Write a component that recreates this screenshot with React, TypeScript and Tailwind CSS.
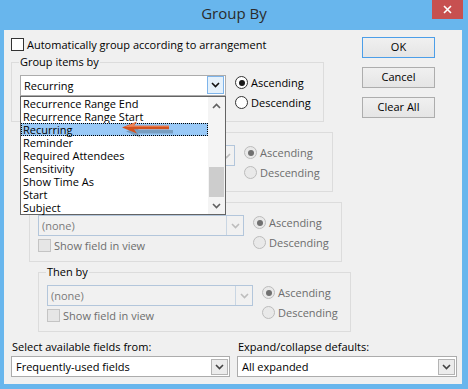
import React from "react";

const Chevron = ({ color = "#1a1a1a", up = false }: { color?: string; up?: boolean }) => (
  <svg width="9" height="6" viewBox="0 0 9 6">
    <path
      d={up ? "M1 5 L4.5 1.5 L8 5" : "M1 1 L4.5 4.5 L8 1"}
      fill="none"
      stroke={color}
      strokeWidth="1.6"
    />
  </svg>
);

const Radio = ({ label, checked, disabled }: { label: string; checked?: boolean; disabled?: boolean }) => (
  <div className="flex items-center h-[13px]">
    <span
      className={
        disabled
          ? "w-[13px] h-[13px] rounded-full border border-[#bcbcbc] bg-[#e9e9e9] flex items-center justify-center"
          : "w-[13px] h-[13px] rounded-full border border-[#333333] bg-white flex items-center justify-center"
      }
    >
      {checked ? (
        <span
          className={
            disabled
              ? "w-[6px] h-[6px] rounded-full bg-[#707070]"
              : "w-[6px] h-[6px] rounded-full bg-[#1a1a1a]"
          }
        />
      ) : null}
    </span>
    <span className={disabled ? "ml-[3px] leading-[14px] text-[#6d6d6d]" : "ml-[3px] leading-[14px] text-black"}>
      {label}
    </span>
  </div>
);

const Check = ({ label, disabled, hidden }: { label: string; disabled?: boolean; hidden?: boolean }) => (
  <div className={hidden ? "flex items-center h-[13px] invisible" : "flex items-center h-[13px]"}>
    <span
      className={
        disabled
          ? "w-[13px] h-[13px] border border-[#c4c4c4] bg-[#e6e6e6]"
          : "w-[13px] h-[13px] border border-[#333333] bg-white"
      }
    />
    <span className={disabled ? "ml-[3px] leading-[14px] text-[#6d6d6d]" : "ml-[3px] leading-[14px] text-black"}>
      {label}
    </span>
  </div>
);

const DisabledCombo = ({ hiddenText }: { hiddenText?: boolean }) => (
  <div className="w-[206px] h-[21px] border border-[#b3c6db] bg-[#f1f1f1] flex">
    <span
      className={
        hiddenText
          ? "flex-1 pl-[3px] leading-[19px] text-[#7a7a7a] invisible"
          : "flex-1 pl-[3px] leading-[19px] text-[#7a7a7a]"
      }
    >
      (none)
    </span>
    <span className="w-[17px] h-full border-l border-[#c9d6e3] flex items-center justify-center">
      <Chevron color="#bdbdbd" />
    </span>
  </div>
);

const items = [
  "Recurrence Range End",
  "Recurrence Range Start",
  "Recurring",
  "Reminder",
  "Required Attendees",
  "Sensitivity",
  "Show Time As",
  "Start",
  "Subject",
];

const Arrow = () => (
  <svg className="absolute left-[97px] top-[22px]" width="60" height="22" viewBox="0 0 60 22">
    <path
      d="M6 10 L21 4 L18 8.5 L53 8.5 L53 12 L18 12 L21 16.5 Z"
      fill="rgba(0,0,0,0.22)"
      transform="translate(2,2.5)"
    />
    <path d="M4 8.5 L19 2.5 L16 6.8 L51 6.8 L51 10.3 L16 10.3 L19 14.5 Z" fill="#d3521d" />
    <path d="M6.5 8 L18 3.6 L15.5 6.8 L51 6.8 L51 7.8 L15 7.8 Z" fill="#f0875a" />
  </svg>
);

const Group = ({
  label,
  className,
  hiddenLabel,
  children,
}: {
  label: string;
  className: string;
  hiddenLabel?: boolean;
  children: React.ReactNode;
}) => (
  <div className={className}>
    <span
      className={
        hiddenLabel
          ? "absolute left-[7px] top-[-8px] px-[1px] bg-[#f0f0f0] leading-[14px] text-black invisible"
          : "absolute left-[7px] top-[-8px] px-[1px] bg-[#f0f0f0] leading-[14px] text-black"
      }
    >
      {label}
    </span>
    {children}
  </div>
);

const Button = ({ label, primary }: { label: string; primary?: boolean }) => (
  <div
    className={
      primary
        ? "w-[73px] h-[21px] border border-[#4c9ee8] bg-gradient-to-b from-[#f0f0f0] to-[#e5e5e5] flex items-center justify-center text-black"
        : "w-[73px] h-[21px] border border-[#adadad] bg-gradient-to-b from-[#f0f0f0] to-[#e5e5e5] flex items-center justify-center text-black"
    }
  >
    {label}
  </div>
);

export default function App() {
  return (
    <div className="w-[468px] h-[389px] bg-[#68b6ed] flex flex-col font-['Open_Sans',sans-serif] text-[11px] text-black overflow-hidden">
      <div className="h-[30px] relative flex items-center justify-center">
        <span className="text-[15px] text-[#2b2b2b] mt-[-3px]">Group By</span>
        <div className="absolute right-[5px] top-0 w-[31px] h-[19px] bg-[#c75050] flex items-center justify-center">
          <svg width="9" height="9" viewBox="0 0 9 9">
            <path d="M1 1 L8 8 M8 1 L1 8" stroke="white" strokeWidth="1.6" />
          </svg>
        </div>
      </div>

      <div className="ml-[4px] mr-[6px] mb-[5px] flex-1 bg-[#f0f0f0] pl-[7px] pt-[7px] flex flex-col">
        <div className="flex">
          <div className="w-[341px] pt-[1px] flex flex-col">
            <Check label="Automatically group according to arrangement" />

            <Group
              label="Group items by"
              className="relative mt-[11px] w-[313px] h-[60px] border border-[#dcdcdc] pl-[8px] pt-[12px] flex"
            >
              <div className="relative w-[206px] h-[21px] border border-[#acacac] bg-white flex">
                <span className="flex-1 pl-[3px] leading-[19px]">Recurring</span>
                <span className="mr-[1px] w-[17px] h-[18px] border border-[#7eb4ea] bg-[#e5f1fb] flex items-center justify-center">
                  <Chevron color="#111111" />
                </span>
                <div className="absolute left-[-1px] top-[20px] z-10 w-[206px] h-[119px] border border-[#646464] bg-white flex">
                  <div className="flex-1 flex flex-col">
                    {items.map((it) =>
                      it === "Recurring" ? (
                        <div
                          key={it}
                          className="h-[13px] leading-[11px] pl-[1px] bg-[#99c9f7] border border-dotted border-black"
                        >
                          {it}
                        </div>
                      ) : (
                        <div key={it} className="h-[13px] leading-[13px] pl-[2px]">
                          {it}
                        </div>
                      )
                    )}
                  </div>
                  <div className="w-[17px] bg-[#f4f4f4] flex flex-col">
                    <div className="h-[17px] flex items-center justify-center">
                      <Chevron color="#606060" up />
                    </div>
                    <div className="flex-1" />
                    <div className="h-[30px] mx-[1px] bg-[#cdcdcd]" />
                    <div className="h-[17px] flex items-center justify-center">
                      <Chevron color="#606060" />
                    </div>
                  </div>
                  <Arrow />
                </div>
              </div>
              <div className="ml-[9px] mt-[1px] flex flex-col gap-[7px]">
                <Radio label="Ascending" checked />
                <Radio label="Descending" />
              </div>
            </Group>

            <Group
              label="Then by"
              hiddenLabel
              className="relative mt-[10px] ml-[9px] w-[313px] h-[60px] border border-[#dcdcdc] pl-[8px] pt-[12px] flex"
            >
              <div className="flex flex-col">
                <DisabledCombo hiddenText />
                <div className="mt-[3px]">
                  <Check label="Show field in view" disabled hidden />
                </div>
              </div>
              <div className="ml-[9px] mt-[1px] flex flex-col gap-[7px]">
                <Radio label="Ascending" checked disabled />
                <Radio label="Descending" disabled />
              </div>
            </Group>

            <Group
              label="Then by"
              hiddenLabel
              className="relative mt-[10px] ml-[18px] w-[313px] h-[60px] border border-[#dcdcdc] pl-[8px] pt-[12px] flex"
            >
              <div className="flex flex-col">
                <DisabledCombo />
                <div className="mt-[3px]">
                  <Check label="Show field in view" disabled />
                </div>
              </div>
              <div className="ml-[9px] mt-[1px] flex flex-col gap-[7px]">
                <Radio label="Ascending" checked disabled />
                <Radio label="Descending" disabled />
              </div>
            </Group>

            <Group
              label="Then by"
              className="relative mt-[10px] ml-[27px] w-[313px] h-[60px] border border-[#dcdcdc] pl-[8px] pt-[12px] flex"
            >
              <div className="flex flex-col">
                <DisabledCombo />
                <div className="mt-[3px]">
                  <Check label="Show field in view" disabled />
                </div>
              </div>
              <div className="ml-[9px] mt-[1px] flex flex-col gap-[7px]">
                <Radio label="Ascending" checked disabled />
                <Radio label="Descending" disabled />
              </div>
            </Group>
          </div>

          <div className="ml-[10px] flex flex-col gap-[9px]">
            <Button label="OK" primary />
            <Button label="Cancel" />
            <Button label="Clear All" />
          </div>
        </div>

        <div className="mt-[7px] flex">
          <div className="w-[219px] flex flex-col">
            <span className="pl-[1px] leading-[16px]">Select available fields from:</span>
            <div className="mt-[1px] w-[219px] h-[21px] border border-[#acacac] bg-white flex">
              <span className="flex-1 pl-[4px] leading-[19px]">Frequently-used fields</span>
              <span className="mt-[2px] mr-[1px] w-[17px] h-[16px] border border-[#b4b4b4] bg-[#ececec] flex items-center justify-center">
                <Chevron color="#444444" />
              </span>
            </div>
          </div>
          <div className="ml-[7px] w-[220px] flex flex-col">
            <span className="pl-[1px] leading-[16px]">Expand/collapse defaults:</span>
            <div className="mt-[1px] w-[220px] h-[21px] border border-[#acacac] bg-white flex">
              <span className="flex-1 pl-[4px] leading-[19px]">All expanded</span>
              <span className="mt-[2px] mr-[1px] w-[17px] h-[16px] border border-[#b4b4b4] bg-[#ececec] flex items-center justify-center">
                <Chevron color="#444444" />
              </span>
            </div>
          </div>
        </div>
      </div>
    </div>
  );
}
